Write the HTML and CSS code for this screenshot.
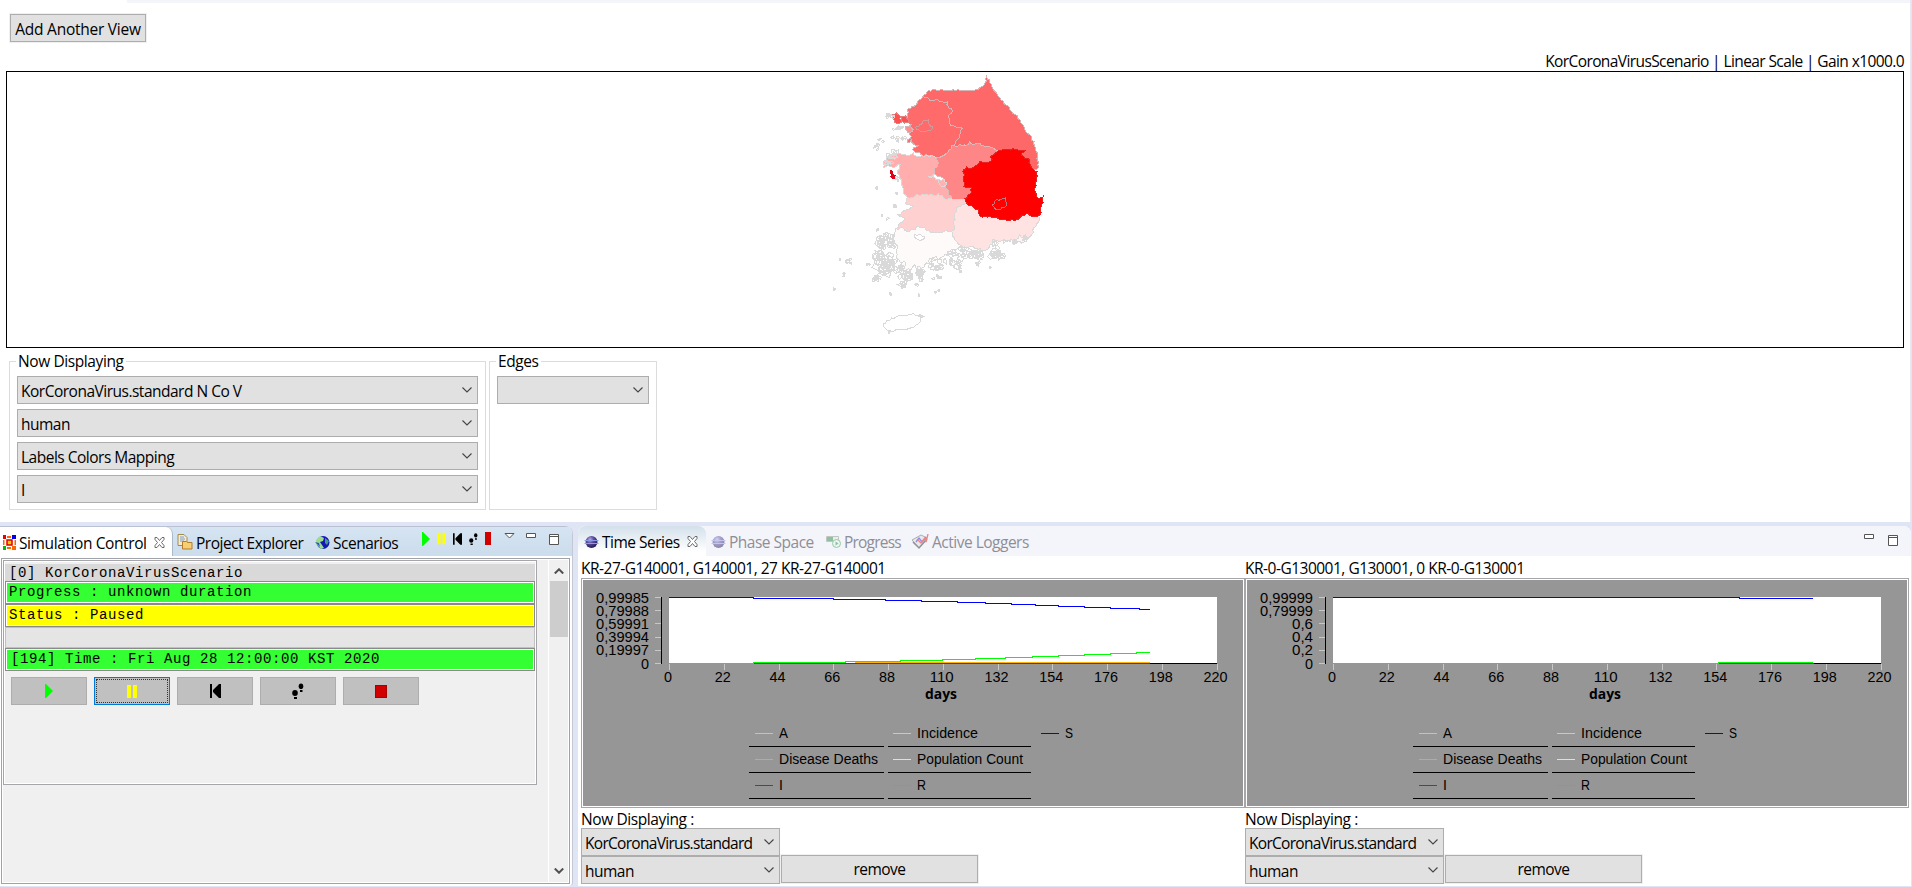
FILE: index.html
```html
<!DOCTYPE html>
<html lang="en">
<head>
<meta charset="utf-8">
<title>Simulation Workbench</title>
<link rel="stylesheet" href="styles.css">
</head>
<body>
<svg width="0" height="0" class="defs">
  <defs>
    <radialGradient id="ball" cx="38%" cy="30%" r="70%"><stop offset="0" stop-color="#b9aede"/><stop offset=".45" stop-color="#5b4c9f"/><stop offset="1" stop-color="#241d56"/></radialGradient>
    <symbol id="close" viewBox="0 0 11 11"><path d="M1 .5h2l2.500 3 2.500-3h2v2L7.500 5.500l2.500 3v2H8L5.500 7.500 3 10.500H1v-2l2.500-3L1 2.500z" fill="#fff" stroke="#6a6a6a"/></symbol>
    <symbol id="chev" viewBox="0 0 10 6"><path d="M.5.5 5 5 9.500.5" fill="none" stroke="#444" stroke-width="1.100"/></symbol>
    <symbol id="play" viewBox="0 0 8 14"><path d="M0 0h1l7 7-7 7H0z" fill="#0f0"/></symbol>
    <symbol id="pause" viewBox="0 0 10 13"><path d="M0 0h4v13H0zM6 0h4v13H6z" fill="#ff0"/></symbol>
    <symbol id="back" viewBox="0 0 11 14"><path d="M0 0h2v14H0zM11 0v14H9L3 8V6l6-6z" fill="#000"/></symbol>
    <symbol id="steps" viewBox="0 0 12 16"><ellipse cx="3" cy="10" rx="2.800" ry="3"/><path d="M2 14h3v2H2z"/><ellipse cx="9" cy="3.200" rx="2.300" ry="2.800"/><path d="M8 7h2.500v2H8z"/></symbol>
    <symbol id="min" viewBox="0 0 10 5"><path d="M.5.5h9v4h-9z" fill="#fff" stroke="#555"/></symbol>
    <symbol id="max" viewBox="0 0 10 11"><path d="M.5.5h9v10h-9zM.5 2.500h9" fill="#fff" stroke="#555"/></symbol>
    <symbol id="sphere" viewBox="0 0 14 14"><circle cx="7" cy="7" r="6" fill="url(#ball)"/><path d="M0 5.500h14M0 8.500h14" stroke="#8c9be8" stroke-width="1"/></symbol>
  </defs>
</svg>

<section class="editor">
  <div class="editor-tabs"></div>
  <button class="btn add">Add Another View</button>
  <div class="caption"><span>KorCoronaVirusScenario | Linear Scale | Gain x1000.0</span></div>
  <div class="map"><svg id="korea" width="240" height="280" viewBox="0 0 720 840" shape-rendering="crispEdges"></svg></div>
  <div class="groups">
    <div class="group g1"><span class="legend">Now Displaying</span>
      <div class="combo"><span>KorCoronaVirus.standard N Co V</span><svg width="10" height="6"><use href="#chev"/></svg></div>
      <div class="combo"><span>human</span><svg width="10" height="6"><use href="#chev"/></svg></div>
      <div class="combo"><span>Labels Colors Mapping</span><svg width="10" height="6"><use href="#chev"/></svg></div>
      <div class="combo"><span>I</span><svg width="10" height="6"><use href="#chev"/></svg></div>
    </div>
    <div class="group g2"><span class="legend">Edges</span>
      <div class="combo"><span></span><svg width="10" height="6"><use href="#chev"/></svg></div>
    </div>
  </div>
</section>

<div class="lower">
  <section class="control">
    <header class="tabs blue">
      <div class="tab on t-sim"><svg width="13" height="15" viewBox="0 0 13 15"><path d="M0 0h3v4H0z" fill="#e00"/><path d="M9 0h4v4H9z" fill="#00e"/><path d="M0 11h3v4H0z" fill="#0b0"/><path d="M9 11h4v4H9zM4 1h4v2H4zM4 12h4v2H4zM0 5h1.500v5H0zM11.500 5h1.500v5h-1.500z" fill="#f60"/><path d="M4 5h5v5H4z" fill="#fc0" stroke="#d00" stroke-width="1.500"/></svg><span>Simulation Control</span><svg class="x" width="11" height="11"><use href="#close"/></svg></div>
      <div class="tab t-proj"><svg width="16" height="16" viewBox="0 0 16 16"><path d="M1 .5h6l3 3v8H1z" fill="#f3ecd0" stroke="#a58a4d"/><path d="M3 3h4M3 5h5M3 7h4" stroke="#7f9cc8"/><path d="M5.500 7.500h4l1 1h4.500v6.500H5.500z" fill="#f7ce72" stroke="#b27c2a"/></svg><span>Project Explorer</span></div>
      <div class="tab t-scen"><svg width="15" height="15" viewBox="0 0 15 15"><circle cx="8" cy="7.500" r="6.500" fill="#1616b8"/><path d="M5 1l4 2-1 3-3 1 2 3 2 3-3 1-5-5V5z" fill="#9ddc8c"/><path d="M10 3l4 3-2 4-2-2z" fill="#3ea07c"/><path d="M0 7l4 1 1 4z" fill="#2b50c8"/></svg><span>Scenarios</span></div>
      <div class="tools">
        <svg width="8" height="14"><use href="#play"/></svg>
        <svg width="9" height="13"><use href="#pause"/></svg>
        <svg width="9" height="14"><use href="#back"/></svg>
        <svg width="9" height="14"><use href="#steps"/></svg>
        <i class="stop"></i>
      </div>
      <div class="winbtns">
        <svg width="11" height="6" viewBox="0 0 11 6"><path d="M1 .5h9l-4.500 4.500z" fill="#fff" stroke="#555"/></svg>
        <svg width="10" height="5"><use href="#min"/></svg>
        <svg width="10" height="11"><use href="#max"/></svg>
      </div>
    </header>
    <div class="scroller">
      <div class="pane">
        <div class="row head">[0] KorCoronaVirusScenario</div>
        <div class="row green">Progress : unknown duration</div>
        <div class="row yellow">Status : Paused</div>
        <div class="row blank"></div>
        <div class="row green time">[194] Time : Fri Aug 28 12:00:00 KST 2020</div>
        <div class="buttons">
          <button><svg width="8" height="14"><use href="#play"/></svg></button>
          <button class="focus"><svg width="10" height="13"><use href="#pause"/></svg></button>
          <button><svg width="11" height="14"><use href="#back"/></svg></button>
          <button><svg width="12" height="16"><use href="#steps"/></svg></button>
          <button><i class="stop big"></i></button>
        </div>
      </div>
      <div class="scrollbar">
        <svg width="10" height="6" viewBox="0 0 10 6"><path d="M.8 5.500 5 1.300l4.200 4.200" fill="none" stroke="#505050" stroke-width="2"/></svg>
        <div class="thumb"></div>
        <svg class="down" width="10" height="6" viewBox="0 0 10 6"><path d="M.8.5 5 4.700 9.200.5" fill="none" stroke="#505050" stroke-width="2"/></svg>
      </div>
    </div>
  </section>

  <section class="series">
    <header class="tabs pale">
      <div class="tab on t-time"><svg width="15" height="14"><use href="#sphere"/></svg><span>Time Series</span><svg class="x" width="11" height="11"><use href="#close"/></svg></div>
      <div class="tab dim t-phase"><svg width="15" height="14"><use href="#sphere"/></svg><span>Phase Space</span></div>
      <div class="tab dim t-prog"><svg width="15" height="13" viewBox="0 0 15 13"><path d="M.5 1.500h12v5H.5z" fill="#dfe8dc" stroke="#8a9a8a"/><path d="M1 2h6v4H1z" fill="#2c8c4c"/><circle cx="10.500" cy="8.500" r="4" fill="#e4f5e4" stroke="#3d9a52"/><path d="M9.500 6.500l3 2-3 2z" fill="#2c8c4c"/></svg><span>Progress</span></div>
      <div class="tab dim t-log"><svg width="17" height="16" viewBox="0 0 17 16"><path d="M0 6l9-5 6 3-8 10z" fill="#ddd" stroke="#666"/><path d="M1 8l6 6 8-9" fill="none" stroke="#333" stroke-width="1.500"/><path d="M4 8l3-4 3 4 4-5" fill="none" stroke="#22d" stroke-width="1.300"/><path d="M5 5l4 4 4-5 1 4 2-8" fill="none" stroke="#e11" stroke-width="1.300"/></svg><span>Active Loggers</span></div>
      <div class="winbtns"><svg width="10" height="5"><use href="#min"/></svg><svg width="10" height="11"><use href="#max"/></svg></div>
    </header>
    <div class="charts">
      <article class="chart">
        <h3>KR-27-G140001, G140001, 27 KR-27-G140001</h3>
        <div class="plot"><svg class="plotsvg" data-chart="a"></svg></div>
        <div class="nd">Now Displaying :</div>
        <div class="combo std"><span>KorCoronaVirus.standard</span><svg width="10" height="6"><use href="#chev"/></svg></div>
        <div class="last"><div class="combo"><span>human</span><svg width="10" height="6"><use href="#chev"/></svg></div><button class="btn remove">remove</button></div>
      </article>
      <article class="chart">
        <h3>KR-0-G130001, G130001, 0 KR-0-G130001</h3>
        <div class="plot"><svg class="plotsvg" data-chart="b"></svg></div>
        <div class="nd">Now Displaying :</div>
        <div class="combo std"><span>KorCoronaVirus.standard</span><svg width="10" height="6"><use href="#chev"/></svg></div>
        <div class="last"><div class="combo"><span>human</span><svg width="10" height="6"><use href="#chev"/></svg></div><button class="btn remove">remove</button></div>
      </article>
    </div>
  </section>
</div>
<script src="views.js"></script>
</body>
</html>
```
FILE: styles.css
```css
* { box-sizing: border-box; }
html, body { margin: 0; height: 887px; overflow: hidden; }
body {
  background: #e0e5f6;
  color: #000;
  font: 15.5px/20px "Open Sans", "Noto Sans", sans-serif;
  letter-spacing: -0.5px;
  white-space: nowrap;
  display: flex;
  flex-direction: column;
}
.defs { position: absolute; }
svg { display: block; flex: none; }
button { font: inherit; letter-spacing: inherit; color: inherit; padding: 0; margin: 0; border-radius: 0; }
.btn { background: #e1e1e1; border: 1px solid #adadad; box-shadow: 0 0 0 1px #f0f0f0; }

/* map editor */
.editor { height: 522px; background: #fff; margin-right: 1px; border-right: 1px solid #e6e8f2; flex: none; }
.editor-tabs { height: 3px; margin-left: 127px; background: #f4f5fb; }
.add { display: block; width: 136px; height: 28px; margin: 11px 0 0 10px; padding-top: 1px; letter-spacing: -0.25px; }
.caption { height: 29px; padding-right: 6px; display: flex; justify-content: flex-end; align-items: flex-end; line-height: 19px; letter-spacing: -0.6px; }
.map { margin: 0 6px; width: 1898px; height: 277px; border: 1px solid #000; padding-left: 813px; overflow: hidden; }
.map svg { margin-top: -4px; }
.groups { display: flex; gap: 3px; padding: 13px 0 0 9px; }
.group { position: relative; border: 1px solid #dcdcdc; height: 149px; padding: 14px 7px 0; display: flex; flex-direction: column; gap: 5px; }
.g1 { width: 477px; }
.g2 { width: 168px; }
.legend { position: absolute; top: -11px; left: 6px; padding: 0 2px; background: #fff; letter-spacing: -0.4px; }
.combo { height: 28px; background: #e1e1e1; border: 1px solid #adadad; display: flex; align-items: center; justify-content: space-between; padding: 0 5px 0 3px; flex: none; }
.combo span { padding-top: 1px; }

/* lower area */
.lower { display: flex; height: 365px; padding-top: 4px; gap: 5px; }
.control { width: 573px; height: 360px; background: #fff; border-right: 1px solid #c3c8d4; border-radius: 0 8px 4px 0; overflow: hidden; }
.tabs { height: 30px; display: flex; position: relative; }
.blue { background: linear-gradient(#d6e4f2, #cbdcec); border-top: 1px solid #b9c1d2; }
.pale { background: #f4f5fb; }
.tab { display: flex; align-items: center; gap: 3px; padding-top: 1px; }
.tab span { padding-top: 1px; }
.tab.on { background: #fff; border-radius: 0 7px 0 0; }
.t-sim { width: 173px; padding-left: 3px; border-right: 1px solid #aab8ca; letter-spacing: -0.4px; }
.t-sim .x { margin-left: 4px; }
.t-proj { width: 138px; padding-left: 4px; }
.t-scen { width: 108px; padding-left: 4px; }
.tools { display: flex; gap: 6px; padding-top: 3px; margin-left: 3px; height: 20px; align-items: center; }
.tools svg, .tools .stop { margin-right: 1px; }
.stop { display: block; width: 6px; height: 13px; background: #d00000; }
.stop.big { width: 12px; height: 13px; border: 1px solid #a00; }
.winbtns { position: absolute; right: 13px; top: 6px; display: flex; gap: 11px; align-items: flex-start; }
.winbtns svg:last-child { margin: 1px 0 0 2px; }
.scroller { margin: 2px 2px 0 1px; height: 326px; border: 1px solid #9fa2a8; padding: 1px; display: flex; background: #f0f0f0; box-shadow: inset 0 0 0 1px #fff; }
.pane { width: 535px; height: 225px; border: 1px solid #a6a6aa; box-shadow: inset 0 0 0 1px #fff; padding: 3px 1px; font: 14px/16px "Liberation Mono", monospace; letter-spacing: 0.6px; }
.row { height: 23px; padding: 2px 0 0 3px; border: 1px solid #8a8a8a; box-shadow: inset 0 0 0 1px #fff; }
.row.head { height: 17px; background: #d9d9d9; border: 0; box-shadow: none; padding: 1px 0 0 4px; }
.green { background: #33ff33; }
.yellow { background: #ff0; }
.row.blank { height: 21px; background: #e5e5e5; border-color: #c0c0c0; box-shadow: none; }
.row.time { padding-left: 5px; }
.buttons { display: flex; gap: 7px; padding: 6px 0 0 6px; }
.buttons button { width: 76px; height: 28px; background: #c0c0c0; border: 1px solid #adadad; display: flex; align-items: center; justify-content: center; }
.buttons .focus { border-color: #0078d7; outline: 1px dotted #333; outline-offset: -3px; }
.scrollbar { width: 20px; margin-left: 11px; border-left: 1px solid #fff; display: flex; flex-direction: column; align-items: center; padding-top: 8px; }
.thumb { width: 18px; height: 56px; margin-top: 7px; background: #cdcdcd; }
.down { margin: auto 0 8px; }

.series { width: 1333px; height: 360px; background: #fff; border-radius: 8px 8px 0 0; overflow: hidden; }
.pale .on { background: linear-gradient(#d3e0ea, #fff 85%); border-radius: 0 8px 0 0; }
.dim { color: #8e8e96; }
.dim svg { opacity: .5; }
.t-time { width: 128px; padding-left: 6px; }
.t-time .x { margin-left: 4px; }
.t-phase { width: 115px; padding-left: 5px; }
.t-prog { width: 86px; padding-left: 5px; letter-spacing: -0.8px; }
.t-log { padding-left: 5px; }
.pale .winbtns { right: 13px; top: 8px; gap: 12px; }
.charts { display: flex; padding-left: 3px; }
.chart { width: 664px; }
h3 { margin: 0; font: inherit; height: 22px; padding-top: 3px; line-height: 19px; }
.plot { height: 230px; border: 1px solid #a6a6aa; padding: 1px; }
.plotsvg { width: 660px; height: 226px; background: #969696; font: 14px "Liberation Sans", sans-serif; letter-spacing: 0; }
.num { font-size: 15px; }
.nd { height: 20px; line-height: 22px; letter-spacing: -0.4px; }
.chart .combo { width: 199px; }
.std { letter-spacing: -0.7px; }
.last { display: flex; gap: 1px; }
.remove { width: 197px; height: 28px; margin-top: -1px; }
.days { font: bold 14.500px "Open Sans", sans-serif; }
```
FILE: views.js
```js
const NS = 'http://www.w3.org/2000/svg';
function add(parent, name, attrs, text) {
  const e = document.createElementNS(NS, name);
  for (const k in attrs) e.setAttribute(k, attrs[k]);
  if (text !== undefined) e.textContent = text;
  parent.appendChild(e);
  return e;
}
let seed = 7;
const rnd = () => (seed = (seed * 16807) % 2147483647) / 2147483647;

/* Borders are roughened per edge, so neighbouring provinces share one outline. */
function edge(a, b) {
  const flip = a[0] > b[0] || (a[0] === b[0] && a[1] > b[1]);
  const p = flip ? b : a, q = flip ? a : b;
  const len = Math.hypot(q[0] - p[0], q[1] - p[1]), n = Math.max(1, Math.round(len / 7));
  let h = (p[0] * 131 + p[1] * 71 + q[0] * 37 + q[1] * 17) % 9973 + 1;
  const pts = [];
  for (let i = 1; i < n; i++) {
    h = (h * 16807) % 2147483647;
    const j = (h / 2147483647 - .5) * 6, t = i / n;
    pts.push([p[0] + (q[0] - p[0]) * t + j * (q[1] - p[1]) / len, p[1] + (q[1] - p[1]) * t - j * (q[0] - p[0]) / len]);
  }
  return flip ? pts.reverse() : pts;
}
function region(svg, fill, stroke, str) {
  const v = str.split(' ').map(s => s.split(',').map(Number));
  const out = [];
  v.forEach((p, i) => { out.push(p, ...edge(p, v[(i + 1) % v.length])); });
  add(svg, 'polygon', { points: out.map(p => p.map(n => n.toFixed(1)).join()).join(' '), fill, stroke, 'stroke-width': 3 });
}
const map = document.getElementById('korea');
const G = '#d4b4b4', L = '#d9d9d9';
region(map, '#ff6868', G, '500,25 515,50 530,75 550,100 575,130 600,155 615,185 635,210 648,240 652,265 657,285 652,303 640,303 632,290 628,275 610,265 605,255 615,248 565,243 535,247 520,240 490,232 480,225 455,228 448,222 440,232 400,232 412,215 427,180 400,172 387,165 387,140 398,128 385,115 382,102 365,100 350,93 330,98 310,82 325,68 345,65 380,67 400,65 465,66 480,58 495,45');
region(map, '#ff6b6b', G, '310,82 330,98 350,93 365,100 382,102 385,115 398,128 387,140 387,165 400,172 427,180 412,215 400,232 388,245 365,265 350,268 330,262 305,262 300,255 282,250 280,238 295,232 280,228 275,215 262,225 262,215 275,205 270,195 268,185 260,180 275,170 265,160 265,120 282,115');
region(map, '#ff6b6b', '#d09a9a', '287,177 300,170 312,157 325,155 328,170 338,175 330,188 310,190 295,185');
region(map, '#ff5050', '#e08080', '217,140 230,133 242,146 243,164 228,165 222,155');
region(map, '#ff5050', '#e08080', '245,145 258,143 265,155 268,165 248,162');
region(map, '#ff8f8f', G, '258,175 272,172 280,185 270,193 260,188');
region(map, '#ffadad', L, '240,255 260,262 280,255 290,265 320,262 350,268 357,285 345,300 345,318 325,325 345,330 360,340 365,355 378,352 385,375 395,392 375,393 355,378 340,383 320,378 290,380 275,388 262,388 250,370 245,340 232,310 240,290 215,297 205,290 190,298 192,280 205,265');
region(map, '#ff8686', '#d8bcbc', '400,232 440,232 448,222 455,228 480,225 490,232 520,240 535,247 515,262 512,280 490,283 480,280 465,293 455,300 440,297 430,305 432,325 432,355 455,360 450,378 435,392 420,393 395,392 385,375 378,352 372,333 345,318 345,300 357,285 350,268 365,265 388,245');
region(map, '#ffb0b0', L, '355,335 372,333 380,345 372,355 360,352');
region(map, '#ffd0d0', L, '262,388 275,388 290,380 320,378 340,383 355,378 375,393 395,392 420,393 435,392 440,405 415,415 405,435 402,460 405,480 395,490 330,492 315,480 295,475 280,485 262,490 250,480 228,482 240,465 255,450 235,440 260,425 280,415 255,405');
region(map, '#fffafa', L, '228,482 250,480 262,490 280,485 295,475 315,480 330,492 395,490 398,498 410,520 430,538 395,545 375,560 350,575 320,585 305,600 300,625 285,590 265,610 250,635 240,605 245,585 228,565 232,540 220,510');
region(map, '#ffe3e3', L, '440,405 460,418 475,425 480,445 510,445 530,448 560,457 590,455 605,442 625,438 657,447 655,462 640,480 635,500 615,515 600,500 590,515 560,517 530,518 510,530 500,545 475,545 460,535 430,538 410,520 398,498 395,490 405,480 402,460 405,435 415,415');
region(map, '#ff0000', '#e82020', '535,247 565,243 615,248 605,255 610,265 628,275 632,290 640,303 652,310 648,330 645,360 650,385 660,390 672,383 665,410 660,440 645,445 625,438 605,442 590,455 560,457 530,448 510,445 480,445 475,425 460,418 440,405 435,392 450,378 455,360 432,355 432,325 430,305 440,297 455,300 465,293 480,280 490,283 512,280 515,262');
region(map, '#ff0000', '#b08080', '517,410 530,395 555,390 560,405 552,420 535,425 522,418');
region(map, '#e00018', '#e00018', '213,305 219,313 226,330 217,331 214,318');
region(map, '#ffffff', L, '283,500 300,498 312,505 308,515 292,514');
region(map, '#fff4f4', L, '588,515 600,500 615,515 605,525');
region(map, '#ffffff', L, '190,768 200,758 215,750 245,742 280,737 305,745 298,765 275,778 250,785 208,787 195,780');

/* Island groups: centre, spread, count, size. */
[[205,148,16,10,6,6],[230,182,22,8,8,5],[235,215,28,10,8,5],[170,238,9,8,4,5],[183,220,8,8,3,5],[222,262,28,12,9,7],[205,285,16,8,5,6],[228,335,8,14,3,5],[170,362,6,3,2,4],[228,375,8,3,2,4],[226,417,8,6,3,5],[185,442,5,3,1,5],[208,450,6,3,1,5],[200,525,28,26,24,10],[190,575,34,30,26,12],[205,608,26,16,13,11],[168,632,14,10,8,7],[250,610,14,24,9,9],[285,620,32,20,19,9],[252,650,14,10,7,7],[345,590,26,20,11,9],[395,575,28,26,15,11],[420,605,5,12,3,5],[345,627,20,5,5,5],[294,650,6,5,2,5],[355,670,10,5,3,4],[213,678,5,4,2,4],[298,679,4,3,1,4],[88,579,7,7,4,6],[57,577,4,3,1,4],[70,618,5,4,2,4],[44,665,6,4,2,4],[145,590,5,4,2,4],[440,555,30,14,15,9],[485,560,26,18,8,8],[530,548,24,24,15,12],[575,522,22,8,6,6],[480,587,10,5,3,5],[513,600,4,3,1,4],[610,512,12,10,5,6],[303,745,5,5,3,4],[207,793,4,6,2,4],[172,487,5,3,1,4]].forEach(([cx, cy, rx, ry, n, s]) => {
  for (let i = 0; i < n; i++) {
    const a = rnd() * 6.283, d = Math.sqrt(rnd()), x = cx + Math.cos(a) * d * rx, y = cy + Math.sin(a) * d * ry;
    const pts = [];
    for (let k = 0; k < 6; k++) {
      const r = s * (.3 + rnd() * .8), t = k * 1.047;
      pts.push((x + Math.cos(t) * r).toFixed(1) + ',' + (y + Math.sin(t) * r).toFixed(1));
    }
    add(map, 'polygon', { points: pts.join(' '), fill: 'none', stroke: L, 'stroke-width': 3 });
  }
});

const charts = {
  a: { x0: 86, x1: 634, y: ['0,99985', '0,79988', '0,59991', '0,39994', '0,19997', '0'],
    s: [0,0, 84,0, 84,1, 164,1, 164,2, 216,2, 216,3, 252,3, 252,4, 288,4, 288,5, 316,5, 316,6, 342,6, 342,7, 366,7, 366,8, 389,8, 389,9, 415,9, 415,10, 441,10, 441,11, 470,11, 470,12, 481,12],
    r: [0,66, 84,66, 84,65, 176,65, 176,64, 231,64, 231,63, 273,63, 273,62, 306,62, 306,61, 336,61, 336,60, 363,60, 363,59, 389,59, 389,58, 415,58, 415,57, 441,57, 441,56, 467,56, 467,55, 481,55], i: 84, orange: 186 },
  b: { x0: 86, x1: 634, y: ['0,99999', '0,79999', '0,6', '0,4', '0,2', '0'],
    s: [0,0, 406,0, 406,1, 480,1], r: [0,66, 385,66, 385,65, 480,65], i: 385 }
};
document.querySelectorAll('.plotsvg').forEach(svg => {
  const c = charts[svg.dataset.chart], T = 17;
  const line = (x1, y1, x2, y2, stroke) => add(svg, 'path', { d: `M${x1} ${y1}L${x2} ${y2}`, stroke, 'shape-rendering': 'crispEdges' });
  const text = (x, y, s, w, anchor, cls) => {
    const at = { x, y, 'text-anchor': anchor || 'start' };
    if (w) { at.textLength = w; at.lengthAdjust = 'spacingAndGlyphs'; }
    if (cls) at.class = cls;
    return add(svg, 'text', at, s);
  };
  add(svg, 'rect', { x: c.x0, y: T, width: c.x1 - c.x0, height: 66, fill: '#fff' });
  line(78.5, T, 78.5, 84, '#000');
  c.y.forEach((l, i) => {
    const y = T + .5 + i * 13.2;
    line(72, y, 78, y, '#c8c8c8');
    text(66, y + 5, l, l.length > 3 ? 53 : l.length > 1 ? 21 : 8, 'end', 'num');
  });
  line(c.x0, 83.5, c.x1, 83.5, '#000');
  for (let i = 0; i <= 10; i++) {
    const x = c.x0 + .5 + i * 54.75;
    line(x, 84, x, 90, '#c8c8c8');
    const s = String(i * 22);
    text(x - 1.5, 102, s, s.length * 8, 'middle', 'num');
  }
  const poly = (p, stroke) => {
    let d = '';
    for (let i = 0; i < p.length; i += 2) d += (i ? 'L' : 'M') + (c.x0 + p[i]) + ' ' + (T + .5 + p[i + 1]);
    add(svg, 'path', { d, stroke, fill: 'none', 'shape-rendering': 'crispEdges' });
  };
  if (c.orange) line(c.x0 + c.orange, 82.5, c.x0 + 481, 82.5, '#ffb400');
  line(c.x0 + c.i, 83.5, c.x0 + 481, 83.5, '#e00000');
  poly(c.r, '#00ff00');
  poly(c.s, '#0000ff');
  text(358, 119, 'days', 32, 'middle', 'days');
  [['A', 0, 0, '#ffc020', 9], ['Incidence', 1, 0, '#c8c8c8', 61], ['S', 2, 0, '#0000ff', 8], ['Disease Deaths', 0, 1, '#20e8e8', 99], ['Population Count', 1, 1, '#dcdcf8', 106], ['I', 0, 2, '#ff0000'], ['R', 1, 2, '#10f010', 9]].forEach(([s, col, row, color, w]) => {
    const x = [172, 310, 458][col], y = 153.5 + row * 26;
    line(x, y, x + 18, y, color);
    text(x + 24, y + 4.5, s, w);
    if (col < 2) line([166, 305][col], y + 13, [301, 448][col], y + 13, '#000');
  });
});
```
